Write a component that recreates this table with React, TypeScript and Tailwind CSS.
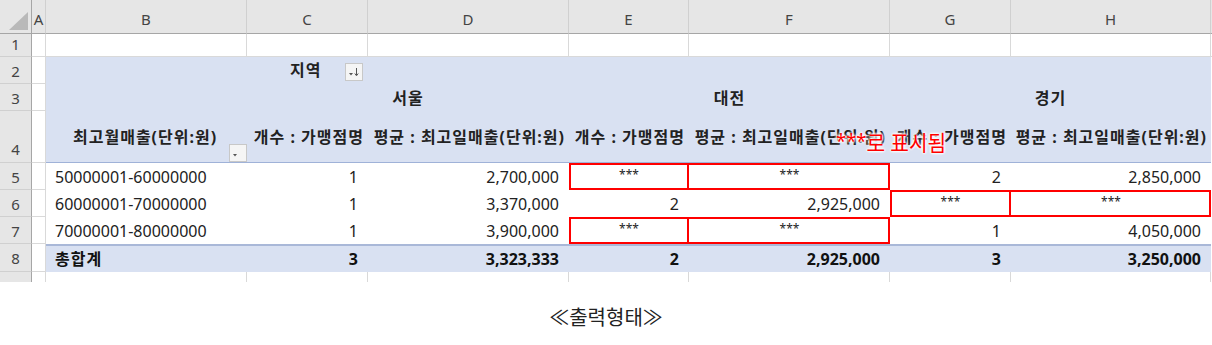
import React from "react";

const font = { fontFamily: '"Noto Sans", "Noto Sans CJK KR", sans-serif' };

const colLetters = ["A", "B", "C", "D", "E", "F", "G", "H"];
const grid = "border-r border-b border-[#d9d9d9]";
const hdr = "bg-[#e6e6e6] text-[#444] text-[15px] flex items-center justify-center";
const blue = "bg-[#d9e1f2]";
const redBox = "shadow-[inset_0_0_0_2px_#ff0000]";
const redBoxNoLeft = "shadow-[inset_-2px_0_0_0_#ff0000,inset_0_2px_0_0_#ff0000,inset_0_-2px_0_0_#ff0000]";

function FilterButton({ sort }: { sort?: boolean }) {
  return (
    <div className="w-[18px] h-[18px] bg-[#f5f5f5] border border-[#c8c8c8] flex items-end justify-center pb-[3px]">
      <svg width="12" height="10" viewBox="0 0 12 10">
        <path d="M1 6 L5 6 L3 8.5 Z" fill="#555" />
        {sort && (
          <>
            <path d="M8.5 1 V8" stroke="#555" strokeWidth="1" />
            <path d="M6.8 6.5 L8.5 8.8 L10.2 6.5" stroke="#555" strokeWidth="1" fill="none" />
          </>
        )}
      </svg>
    </div>
  );
}

const rows: { n: number; label: string; cells: string[]; boxed: number[] }[] = [
  { n: 5, label: "50000001-60000000", cells: ["1", "2,700,000", "***", "***", "2", "2,850,000"], boxed: [2, 3] },
  { n: 6, label: "60000001-70000000", cells: ["1", "3,370,000", "2", "2,925,000", "***", "***"], boxed: [4, 5] },
  { n: 7, label: "70000001-80000000", cells: ["1", "3,900,000", "***", "***", "1", "4,050,000"], boxed: [2, 3] },
];

const totals = ["3", "3,323,333", "2", "2,925,000", "3", "3,250,000"];

export default function App() {
  return (
    <div className="w-[1212px] h-[345px] bg-white overflow-hidden" style={font}>
      <div className="relative">
        <div className="grid grid-cols-[32px_14px_201px_121px_201px_120px_201px_121px_200px_1fr] grid-rows-[34px_23px_27px_27px_52px_27px_27px_27px_28px_10px]">
          {/* column header row */}
          <div className="bg-[#e6e6e6] border-r border-b border-[#a6a6a6] flex items-end justify-end pr-[3px] pb-[3px]">
            <svg width="19" height="18" viewBox="0 0 19 18">
              <path d="M19 0 L19 18 L0 18 Z" fill="#b9b9b9" />
            </svg>
          </div>
          {colLetters.map((c) => (
            <div key={c} className={`${hdr} border-r border-[#d0d0d0] border-b border-b-[#a6a6a6] pt-[6px]`}>
              {c}
            </div>
          ))}
          <div className="bg-[#e6e6e6] border-b border-[#a6a6a6]" />

          {/* row 1 */}
          <div className={`${hdr} border-r border-r-[#a6a6a6] border-b border-b-[#d0d0d0] items-end pb-[1px]`}>1</div>
          {colLetters.map((c) => (
            <div key={c} className={grid} />
          ))}
          <div className="border-b border-[#d9d9d9]" />

          {/* row 2 */}
          <div className={`${hdr} border-r border-r-[#a6a6a6] border-b border-b-[#d0d0d0] items-end pb-[1px]`}>2</div>
          <div className={grid} />
          <div className={blue} />
          <div className={`${blue} flex items-center pl-[43px] gap-[24px] font-bold text-[16px] tracking-[1px] text-[#222]`}>
            <span className="pb-[2px]">지역</span>
            <div className="pt-[3px]">
              <FilterButton sort />
            </div>
          </div>
          <div className={`${blue} col-span-5`} />
          <div />

          {/* row 3 */}
          <div className={`${hdr} border-r border-r-[#a6a6a6] border-b border-b-[#d0d0d0] items-end pb-[1px]`}>3</div>
          <div className={grid} />
          <div className={blue} />
          {["서울", "대전", "경기"].map((r) => (
            <div key={r} className={`${blue} col-span-2 flex items-center justify-center font-bold text-[16px] tracking-[1px] text-[#222]`}>
              {r}
            </div>
          ))}
          <div />

          {/* row 4 */}
          <div className={`${hdr} border-r border-r-[#a6a6a6] border-b border-b-[#d0d0d0] items-end pb-[2px]`}>4</div>
          <div className={grid} />
          <div className={`${blue} border-b border-[#9fb2d8] relative flex items-center pl-[27px] font-bold text-[16px] tracking-[1px] text-[#222] whitespace-nowrap`}>
            최고월매출(단위:원)
            <div className="absolute right-0 bottom-0">
              <FilterButton />
            </div>
          </div>
          {[0, 1, 2].map((i) => (
            <React.Fragment key={i}>
              <div className={`${blue} border-b border-[#9fb2d8] flex items-center justify-end pr-[4px] font-bold text-[16px] tracking-[1px] text-[#222] whitespace-nowrap`}>
                개수 : 가맹점명
              </div>
              <div className={`${blue} border-b border-[#9fb2d8] flex items-center justify-end pr-[4px] font-bold text-[16px] tracking-[1px] text-[#222] whitespace-nowrap`}>
                평균 : 최고일매출(단위:원)
              </div>
            </React.Fragment>
          ))}
          <div />

          {/* data rows */}
          {rows.map((r) => (
            <React.Fragment key={r.n}>
              <div className={`${hdr} border-r border-r-[#a6a6a6] border-b border-b-[#d0d0d0] items-end pb-[1px]`}>{r.n}</div>
              <div className={grid} />
              <div className="flex items-center pl-[9px] text-[16px] text-[#222] whitespace-nowrap">{r.label}</div>
              {r.cells.map((v, i) => {
                const masked = v === "***";
                const boxCls = r.boxed.includes(i) ? (r.boxed[0] === i ? redBox : redBoxNoLeft) : "";
                return (
                  <div
                    key={i}
                    className={`flex items-center text-[#222] ${
                      masked ? "justify-center text-[12px] pb-[4px]" : "justify-end pr-[10px] text-[16px]"
                    } ${boxCls}`}
                  >
                    {v}
                  </div>
                );
              })}
              <div />
            </React.Fragment>
          ))}

          {/* total row */}
          <div className={`${hdr} border-r border-r-[#a6a6a6] border-b border-b-[#d0d0d0] items-end pb-[2px]`}>8</div>
          <div className={grid} />
          <div className={`${blue} border-t-2 border-[#a9b8d8] flex items-center pl-[9px] font-bold text-[16px] tracking-[1px] text-[#111]`}>총합계</div>
          {totals.map((v, i) => (
            <div key={i} className={`${blue} border-t-2 border-[#a9b8d8] flex items-center justify-end pr-[10px] font-bold text-[16px] text-[#111]`}>
              {v}
            </div>
          ))}
          <div />

          {/* row 9 partial */}
          <div className="bg-[#e6e6e6] border-r border-[#a6a6a6]" />
          {colLetters.map((c) => (
            <div key={c} className="border-r border-[#d9d9d9]" />
          ))}
          <div />
        </div>

        {/* annotation */}
        <span
          className="absolute left-[836px] top-[131px] text-[22px] text-[#ff0000] whitespace-nowrap leading-none origin-left scale-x-[0.92]"
          style={{ textShadow: "0 0 3px #fff, 0 0 3px #fff, 0 0 3px #fff, 0 0 3px #fff" }}
        >
          <span className="text-[20px] align-top">***</span>로 표시됨
        </span>
      </div>

      <div className="flex justify-center pt-[21px] text-[20px] text-[#222]">≪출력형태≫</div>
    </div>
  );
}
